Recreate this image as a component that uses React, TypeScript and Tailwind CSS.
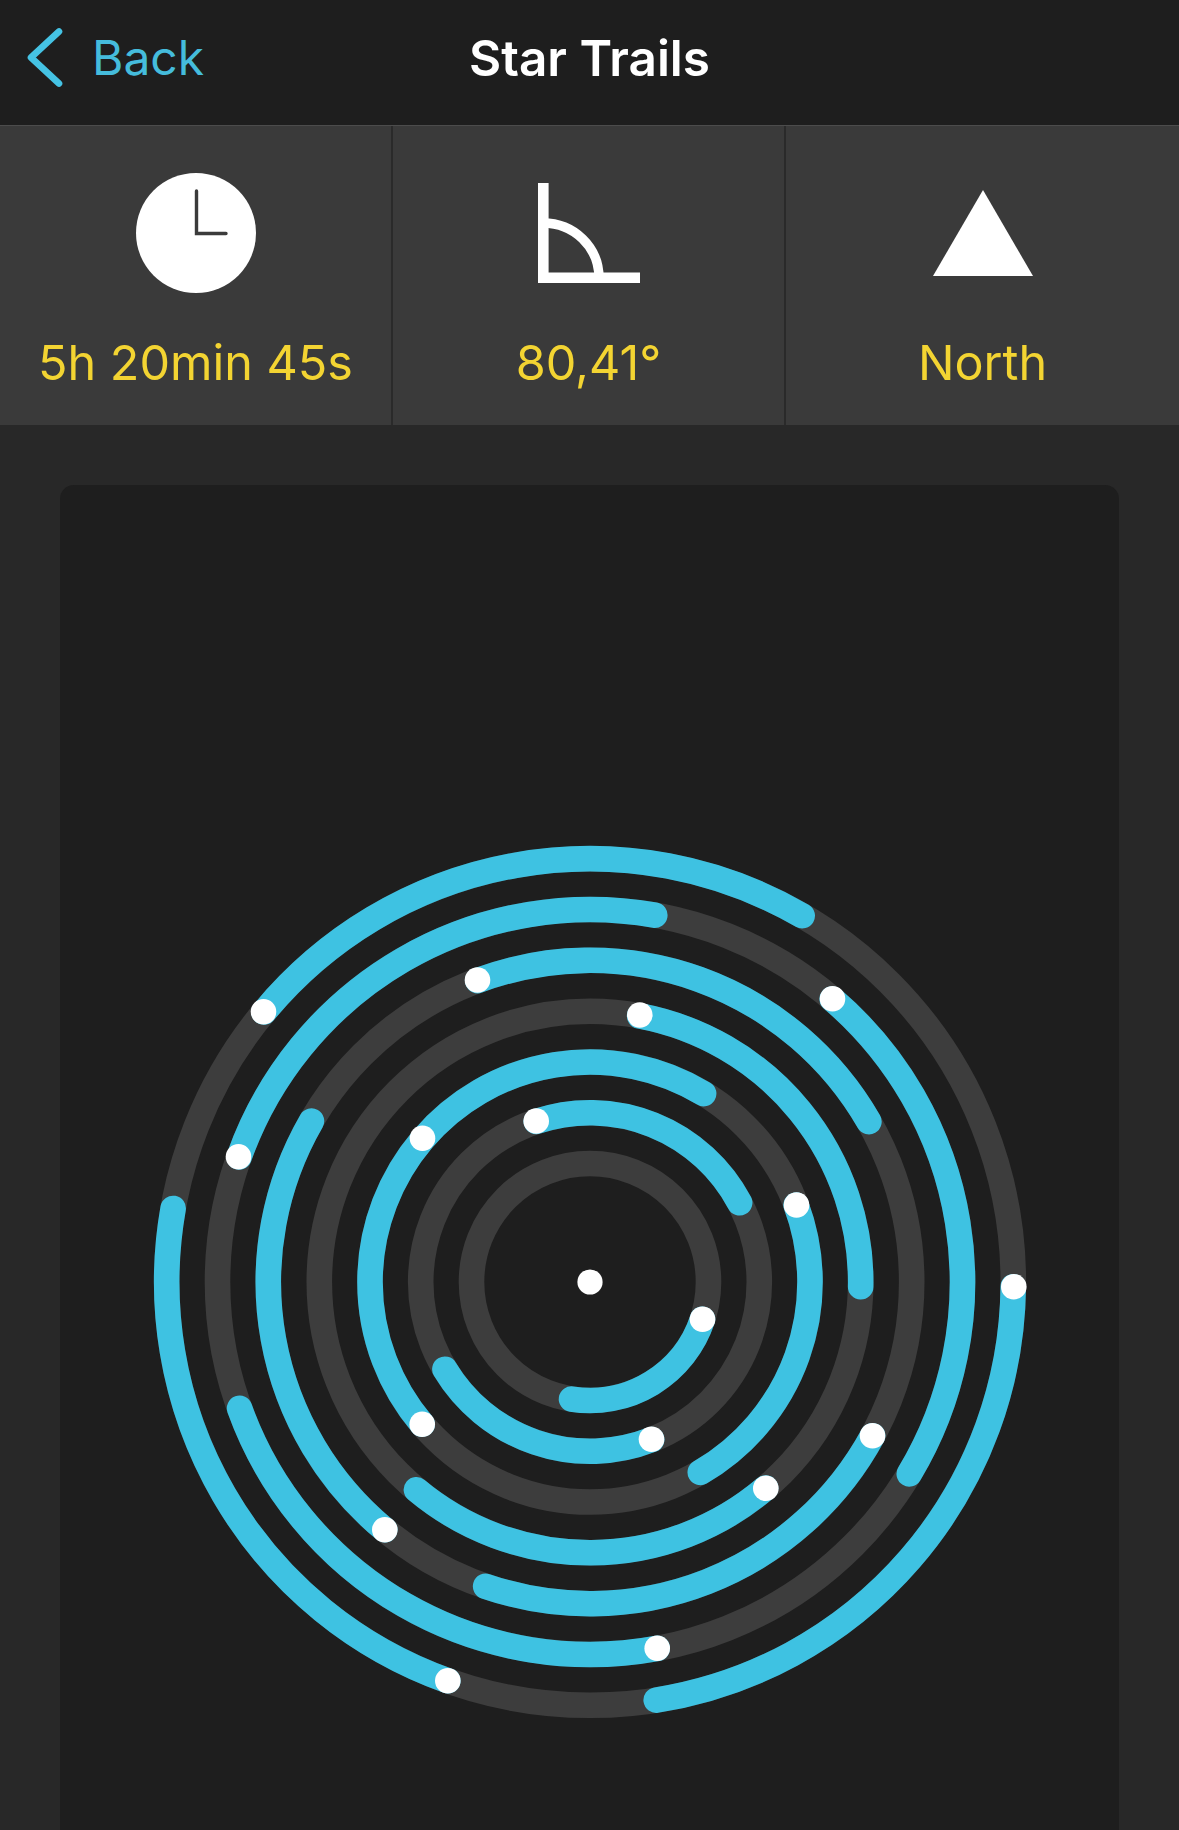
const CX = 589.5;
const CY = 1282;
const SIZE = 900;

const RINGS = [423.3, 372.5, 321.7, 270.7, 220, 169.3, 118.5];

// arcs go clockwise on screen, from -> to, in page pixels
const ARCS: { r: number; from: number[]; to: number[] }[] = [
  { r: 423.3, from: [263, 1011.7], to: [801.7, 915.7] },
  { r: 423.3, from: [1013.3, 1286.7], to: [655.7, 1700] },
  { r: 423.3, from: [447.3, 1680.7], to: [171.7, 1208.3] },
  { r: 372.5, from: [238, 1156.7], to: [654.3, 915] },
  { r: 372.5, from: [832, 998.7], to: [909, 1474] },
  { r: 372.5, from: [656.7, 1648.3], to: [239.3, 1408.3] },
  { r: 321.7, from: [477, 980], to: [868.3, 1121.7] },
  { r: 321.7, from: [384.3, 1529.7], to: [310.3, 1120.7] },
  { r: 321.7, from: [872, 1435.7], to: [485, 1586.7] },
  { r: 270.7, from: [639.3, 1015], to: [860.7, 1286.7] },
  { r: 270.7, from: [765.3, 1488.3], to: [415.7, 1490] },
  { r: 220, from: [421.7, 1424.3], to: [703.3, 1093.3] },
  { r: 220, from: [796, 1205], to: [700, 1472.7] },
  { r: 169.3, from: [535.7, 1121], to: [740, 1202.3] },
  { r: 169.3, from: [651, 1439.3], to: [444.3, 1369.3] },
  { r: 118.5, from: [702, 1319.3], to: [571, 1399.3] },
];

// the one dot that sits in the middle of an arc
const EXTRA_DOTS = [[422, 1138.3]];

function arcPath(r: number, from: number[], to: number[]) {
  const a0 = Math.atan2(from[1] - CY, from[0] - CX);
  const a1 = Math.atan2(to[1] - CY, to[0] - CX);
  let sweep = a1 - a0;
  if (sweep < 0) sweep += Math.PI * 2;
  const c = SIZE / 2;
  const x0 = c + r * Math.cos(a0);
  const y0 = c + r * Math.sin(a0);
  const x1 = c + r * Math.cos(a1);
  const y1 = c + r * Math.sin(a1);
  return `M${x0} ${y0}A${r} ${r} 0 ${sweep > Math.PI ? 1 : 0} 1 ${x1} ${y1}`;
}

function StarTrails() {
  const c = SIZE / 2;
  const dots = [...ARCS.map((a) => a.from), ...EXTRA_DOTS];
  return (
    <svg width={SIZE} height={SIZE} viewBox={`0 0 ${SIZE} ${SIZE}`} fill="none" className="block">
      {RINGS.map((r) => (
        <circle key={r} cx={c} cy={c} r={r} stroke="#3d3d3d" strokeWidth="25.6" />
      ))}
      {ARCS.map((a, i) => (
        <path key={i} d={arcPath(a.r, a.from, a.to)} stroke="#3ec2e2" strokeWidth="25.6" strokeLinecap="round" />
      ))}
      {dots.map((d, i) => (
        <circle key={i} cx={d[0] - CX + c} cy={d[1] - CY + c} r="12.8" fill="#fff" />
      ))}
      <circle cx={c} cy={c} r="12.6" fill="#fff" />
    </svg>
  );
}

function ClockIcon() {
  return (
    <svg width="120" height="120" viewBox="0 0 120 120" className="block">
      <circle cx="60" cy="60" r="60" fill="#fff" />
      <path d="M60.5 18V60.5H90" fill="none" stroke="#3b3b3b" strokeWidth="3.4" strokeLinecap="round" />
    </svg>
  );
}

function AngleIcon() {
  return (
    <svg width="102" height="120" viewBox="0 0 102 120" className="block">
      <path d="M5.3 10V104.7H102" fill="none" stroke="#fff" strokeWidth="10.6" />
      <path d="M5 50C36 50 61 74 61 105" fill="none" stroke="#fff" strokeWidth="9.4" />
    </svg>
  );
}

function NorthIcon() {
  return (
    <svg width="100" height="120" viewBox="0 0 100 120" className="block">
      <polygon points="50,17 100,103 0,103" fill="#fff" />
    </svg>
  );
}

function Tile({ icon, label }: { icon: React.ReactNode; label: string }) {
  return (
    <div className="flex h-[299px] flex-col items-center bg-[#3a3a3a] pt-[47px]">
      {icon}
      <div className="mt-[40px] text-[48.5px] leading-[60px] text-[#f3d432] whitespace-nowrap">{label}</div>
    </div>
  );
}

export default function App() {
  return (
    <div className="flex h-[1830px] w-[1179px] flex-col overflow-hidden bg-[#282828] font-[Inter,sans-serif]">
      {/* nav bar */}
      <div className="grid h-[125px] grid-cols-3 items-center bg-[#1e1e1e] pb-[10px]">
        <div className="flex items-center pl-[27px]">
          <svg width="36" height="60" viewBox="0 0 36 60" fill="none" className="block">
            <path d="M32 3.5L4 29.5L32 55.5" stroke="#45c3e4" strokeWidth="6.6" strokeLinecap="round" strokeLinejoin="round" />
          </svg>
          <span className="ml-[29px] text-[48px] leading-[60px] text-[#45bcdc]">Back</span>
        </div>
        <div className="text-center text-[49.5px] leading-[60px] font-semibold text-white whitespace-nowrap">Star Trails</div>
        <div />
      </div>

      {/* stat tiles */}
      <div className="grid grid-cols-[391px_391px_1fr] gap-[2px] border-t border-[#4c4c4c] bg-[#2a2a2a]">
        <Tile icon={<ClockIcon />} label="5h 20min 45s" />
        <Tile icon={<AngleIcon />} label="80,41°" />
        <Tile icon={<NorthIcon />} label="North" />
      </div>

      {/* trails panel */}
      <div className="mx-[60px] mt-[60px] flex-1 rounded-t-[14px] bg-[#1e1e1e] pt-[347px]">
        <div className="flex justify-center">
          <StarTrails />
        </div>
      </div>
    </div>
  );
}
